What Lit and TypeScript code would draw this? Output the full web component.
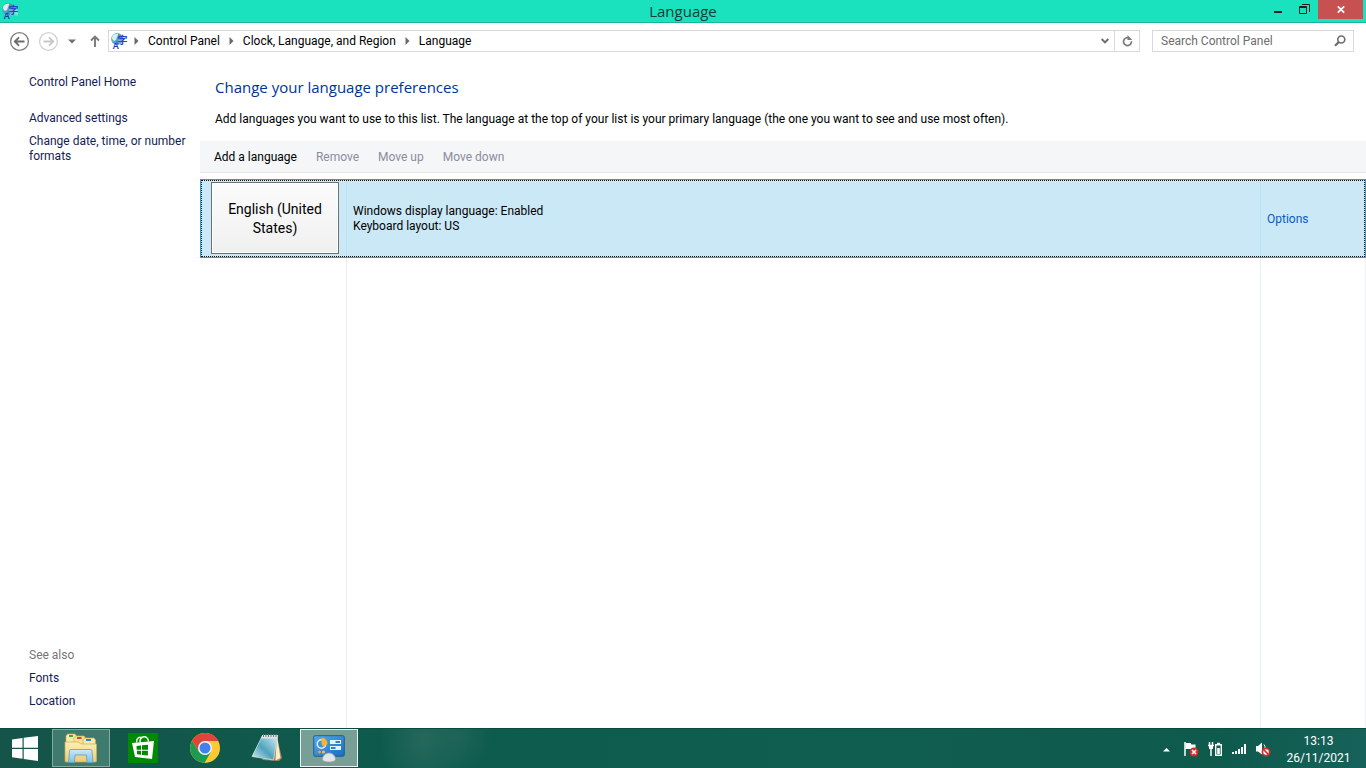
import { LitElement, html, css, svg } from "lit";
import { customElement } from "lit/decorators.js";

const gradients = svg`
  <defs>
    <linearGradient id="globe" x1="0" y1="0" x2="1" y2="1"><stop offset="0" stop-color="#8fd0f5"/><stop offset="1" stop-color="#1565b0"/></linearGradient>
    <linearGradient id="folder" x1="0" y1="0" x2="0" y2="1"><stop offset="0" stop-color="#fdf0b4"/><stop offset="1" stop-color="#ecca70"/></linearGradient>
    <linearGradient id="stand" x1="0" y1="0" x2="0" y2="1"><stop offset="0" stop-color="#c9e9fa"/><stop offset="1" stop-color="#7fc0e6"/></linearGradient>
    <linearGradient id="page" x1="1" y1="0" x2="0" y2="1"><stop offset="0" stop-color="#d8f0f6"/><stop offset=".55" stop-color="#4fa3bd"/><stop offset="1" stop-color="#d8eef4"/></linearGradient>
    <linearGradient id="panel" x1="0" y1="0" x2="1" y2="1"><stop offset="0" stop-color="#55aae8"/><stop offset="1" stop-color="#1a6cc0"/></linearGradient>
  </defs>`;

const globeIcon = html`<svg class="icon" width="16" height="16" viewBox="0 0 16 16" aria-hidden="true">
  ${gradients}
  <circle cx="6.2" cy="6" r="5.7" fill="url(#globe)" stroke="#3c86bd" stroke-width=".5"/>
  <path d="M1 4C2 1.500 5 .4 7 .8L8 2.500 6 4 5 7 3 8 1.200 6z" fill="#d9f1e6"/>
  <path d="M7 1l2.500 1 1 2-2 1-2-1z" fill="#4fa54a"/>
  <path d="M7 6.500h9v6L8 12z" fill="#fff" opacity=".35"/>
  <text x="1.500" y="15.500" font-family="Liberation Sans" font-size="9" font-weight="bold" fill="#1f3fae">A</text>
  <text x="6.500" y="11" font-family="Noto Sans CJK JP" font-size="10" font-weight="bold" fill="#2545c5">字</text>
</svg>`;

const crumbArrow = html`<svg width="5" height="8" viewBox="0 0 5 8" aria-hidden="true"><path d="M.5 0L4.500 4 .5 8z" fill="#6a6a6a"/></svg>`;

@customElement("app-root")
export class AppRoot extends LitElement {
  static styles = css`
    :host {
      display: flex; flex-direction: column; height: 100vh; overflow: hidden;
      font: 12px/15px Roboto, "Open Sans", sans-serif; color: #000; background: #fff;
    }
    * { box-sizing: border-box; }
    button, input { font: inherit; color: inherit; background: none; border: 0; padding: 0; margin: 0; }
    a { text-decoration: none; color: #151c55; }
    svg { display: block; flex: none; overflow: visible; }
    h1, p { margin: 0; font-weight: 400; }

    .titlebar { display: grid; grid-template-columns: 1fr auto 1fr; height: 23px; background: #1ae1be; border-bottom: 1px solid #17b69b; }
    .titlebar .icon { margin: 3px 2px; }
    .title { font: 15px/23px "Open Sans", sans-serif; color: #123c35; }
    .controls { display: flex; justify-content: flex-end; padding-right: 3px; }
    .controls button { width: 27px; height: 19px; display: flex; justify-content: center; }
    .controls .close { width: 45px; background: #c75050; }

    .nav { display: flex; align-items: center; height: 36px; padding: 0 12px 0 9px; }
    .nav .round { margin-right: 8px; }
    .nav .recent { width: 10px; margin-right: 13px; }
    .nav .up { margin-right: 8px; }
    .address { flex: 1; display: flex; align-items: center; height: 22px; border: 1px solid #d9d9d9; padding-left: 2px; }
    .crumbs { flex: 1; display: flex; align-items: center; gap: 9px; padding-left: 7px; }
    .crumbs a { color: #000; }
    .drop { width: 18px; display: flex; justify-content: center; }
    .refresh { width: 25px; height: 20px; display: flex; align-items: center; justify-content: center; border-left: 1px solid #d9d9d9; }
    .search { display: flex; align-items: center; width: 202px; height: 22px; margin-left: 12px; border: 1px solid #d9d9d9; padding: 0 7px 0 8px; }
    .search input { flex: 1; min-width: 0; outline: 0; }
    .search input::placeholder { color: #6d6d6d; opacity: 1; }

    .body { flex: 1; display: flex; min-height: 0; }
    .sidebar { width: 200px; display: flex; flex-direction: column; gap: 8px; padding: 16px 8px 19px 29px; }
    .home { margin-bottom: 13px; }
    .see { margin-top: auto; color: #75757d; }
    .main { flex: 1; display: flex; flex-direction: column; min-width: 0; }
    h1 { font: 15px/22px "Open Sans", sans-serif; color: #003399; padding: 17px 15px 14px; }
    .intro { padding: 0 15px; }
    .toolbar { display: flex; gap: 19px; height: 32px; margin: 14px 0 6px; padding: 2px 14px 0; background: #f5f6f7; border-bottom: 1px solid #e6e7e8; }
    .toolbar button:disabled { color: #8c8ca0; }
    .row { display: grid; grid-template-columns: 145px 1fr 105px; height: 79px; border: 1px solid #26a0da; background: #cbe8f6; outline: 1px dotted #111; outline-offset: -2px; }
    .row > div { display: flex; align-items: center; padding-left: 6px; }
    .row > .name { align-items: stretch; padding: 2px 7px 3px 10px; }
    .row > div + div { border-left: 1px solid #b9e2f5; }
    .tile { flex: 1; border: 1px solid #707070; box-shadow: inset 0 0 0 1px #fff; background: linear-gradient(#fbfbfb, #f5f5f5 60%, #eeefef); font-size: 14px; line-height: 19px; }
    .tile span { display: block; padding: 2px 8px 0; }
    .options { display: block; padding-top: 2px; color: #0a5bc4; }
    .rest { flex: 1; display: grid; grid-template-columns: 146px 1fr 105px; border-right: 1px solid #edf4fc; }
    .rest div + div { border-left: 1px solid #e5f1fb; }

    .taskbar {
      display: flex; align-items: center; height: 40px; color: #fff;
      background:
        radial-gradient(ellipse 44px 60px at 424px 12px, #3b756a80, #2c6c6200),
        radial-gradient(ellipse 30px 40px at 462px 8px, #2c6c6270, #2c6c6200),
        linear-gradient(90deg, #155449, #0d5b4d 30%, #105e50 65%, #0e5a4d 90%, #16625a);
      box-shadow: inset 0 1px #0a4b40;
    }
    .task { width: 58px; height: 38px; margin-right: 4px; display: flex; align-items: center; justify-content: center; border: 1px solid transparent; }
    .start { width: 52px; margin-right: 0; padding-right: 2px; }
    .open { background: #3f7a6f; border-color: #86aaa3; }
    .active { background: #779f95; border-color: #edf3f1; }
    .tray { margin-left: auto; display: flex; align-items: center; gap: 8px; padding-top: 2px; }
    .more { margin-right: 4px; }
    .clock { line-height: 17px; text-align: center; width: 95px; padding-top: 3px; }
  `;

  render() {
    return html`
      <header class="titlebar">
        ${globeIcon}
        <div class="title">Language</div>
        <div class="controls">
          <button aria-label="Minimize"><svg width="10" height="19" viewBox="0 0 10 19"><path d="M1 11h8v2H1z" fill="#222"/></svg></button>
          <button aria-label="Restore"><svg width="11" height="19" viewBox="0 0 11 19"><path d="M3 4.500h7.500V12M.5 6.500h7v7h-7zM.5 7.500h7" fill="none" stroke="#222"/></svg></button>
          <button class="close" aria-label="Close"><svg width="8" height="19" viewBox="0 0 8 19"><path d="M.8 6.300l6.400 6.400M7.200 6.300L.8 12.700" stroke="#fff" stroke-width="1.700"/></svg></button>
        </div>
      </header>

      <nav class="nav">
        <button class="round" aria-label="Back"><svg width="21" height="21" viewBox="0 0 21 21"><circle cx="10.500" cy="10.500" r="8.900" fill="none" stroke="#7c7c7c" stroke-width="1.300"/><path d="M15.500 10.500H6.500M10 6.300L5.800 10.500l4.200 4.200" fill="none" stroke="#6c6c6c" stroke-width="1.900"/></svg></button>
        <button class="round" aria-label="Forward"><svg width="21" height="21" viewBox="0 0 21 21"><circle cx="10.500" cy="10.500" r="8.900" fill="none" stroke="#d2d2d2" stroke-width="1.300"/><path d="M5.500 10.500h9M11 6.300l4.200 4.200-4.200 4.200" fill="none" stroke="#c8c8c8" stroke-width="1.900"/></svg></button>
        <button class="recent" aria-label="Recent locations"><svg width="10" height="5" viewBox="0 0 10 5"><path d="M1 .5h8L5 4.500z" fill="#707070"/></svg></button>
        <button class="up" aria-label="Up"><svg width="10" height="12" viewBox="0 0 10 12"><path d="M5 12V1.500M1 5.500l4-4 4 4" fill="none" stroke="#7a7a7a" stroke-width="1.900"/></svg></button>
        <div class="address">
          ${globeIcon}
          <div class="crumbs">
            ${crumbArrow}<a href="#">Control Panel</a>
            ${crumbArrow}<a href="#">Clock, Language, and Region</a>
            ${crumbArrow}<a href="#">Language</a>
          </div>
          <button class="drop" aria-label="Previous locations"><svg width="8" height="6" viewBox="0 0 8 6"><path d="M.7 1L4 4.300 7.300 1" fill="none" stroke="#6c6c6c" stroke-width="1.900"/></svg></button>
          <button class="refresh" aria-label="Refresh"><svg width="11" height="12" viewBox="0 0 11 12"><path d="M6.800 2.800A4 4 0 1 0 9.500 6.300" fill="none" stroke="#7a7a7a" stroke-width="1.700"/><path d="M5.500 0v5h4.800z" fill="#7a7a7a"/></svg></button>
        </div>
        <label class="search">
          <input type="text" placeholder="Search Control Panel" aria-label="Search Control Panel">
          <svg width="12" height="12" viewBox="0 0 12 12"><circle cx="7.300" cy="4.500" r="3.500" fill="none" stroke="#6c6c6c" stroke-width="1.600"/><path d="M4.800 7L1 10.800" stroke="#6c6c6c" stroke-width="2.200"/></svg>
        </label>
      </nav>

      <div class="body">
        <aside class="sidebar">
          <a class="home" href="#">Control Panel Home</a>
          <a href="#">Advanced settings</a>
          <a href="#">Change date, time, or number formats</a>
          <span class="see">See also</span>
          <a href="#">Fonts</a>
          <a href="#">Location</a>
        </aside>
        <main class="main">
          <h1>Change your language preferences</h1>
          <p class="intro">Add languages you want to use to this list. The language at the top of your list is your primary language (the one you want to see and use most often).</p>
          <div class="toolbar">
            <button>Add a language</button>
            <button disabled>Remove</button>
            <button disabled>Move up</button>
            <button disabled>Move down</button>
          </div>
          <section class="row">
            <div class="name"><button class="tile"><span>English (United States)</span></button></div>
            <div>Windows display language: Enabled<br>Keyboard layout: US</div>
            <div><a class="options" href="#">Options</a></div>
          </section>
          <div class="rest"><div></div><div></div><div></div></div>
        </main>
      </div>

      <footer class="taskbar">
        <button class="task start" aria-label="Start"><svg width="26" height="25" viewBox="0 0 26 25"><path d="M0 3.500L10.500 2v9.800H0zM11.700 1.800L26 0v11.800H11.700zM0 13h10.500v9.800L0 21.300zM11.700 13H26v12l-14.300-2z" fill="#fff"/></svg></button>
        <button class="task open" aria-label="File Explorer"><svg width="34" height="30" viewBox="0 0 34 30">${gradients}
          <path d="M2 3l1.500-2H11l1.500 2H13v24H2z" fill="#fbe9a6" stroke="#d0aa55" stroke-width=".7"/>
          <path d="M10 5l1.500-2H20l1.500 2v20H10z" fill="#f9e296" stroke="#d0aa55" stroke-width=".7"/>
          <path d="M19 7l1.500-2H30l1.500 2v20H19z" fill="#fbe9a6" stroke="#d0aa55" stroke-width=".7"/>
          <path d="M5 2h4v2H5z" fill="#2fae3f"/><path d="M13 4h4.500v2H13z" fill="#d94335"/><path d="M22 6h5v2h-5z" fill="#2a84da"/>
          <path d="M1 9h13l3 2h15.500v17q0 1-1 1H2q-1 0-1-1z" fill="url(#folder)" stroke="#cfa94f" stroke-width=".7"/>
          <path d="M5.500 18q0-1.500 1.500-1.500h19.500q1.500 0 1.500 1.500l1 11.500h-6l-.5-7.500H11l-.5 7.500h-6z" fill="url(#stand)" stroke="#5d9fc8" stroke-width=".8"/></svg></button>
        <button class="task" aria-label="Store"><svg width="30" height="30" viewBox="0 0 30 30"><path fill="#008a00" d="M0 0h30v30H0z"/><path d="M8.500 9.500C8.500 4.500 12 3 14 5.500M12 9.500C11.500 2.500 20 1.500 20.500 8.500" fill="none" stroke="#fff" stroke-width="1.400"/><path d="M4 10l22-2-2 18-17-2z" fill="#fff"/><path d="M8.500 13l4.500-.5v4.200H8.700zM14 12.300l6-.6v5h-6zM8.900 17.700H13v4.100l-3.900-.5zM14 17.700h5.900v4.900l-5.900-.7z" fill="#008a00"/></svg></button>
        <button class="task" aria-label="Chrome"><svg width="30" height="30" viewBox="0 0 30 30"><circle cx="15" cy="15" r="15" fill="#fcc934"/><path d="M2.200 7.300L8.940 18.500 15 15l6.060 3.500L14.500 30A15 15 0 0 1 2.200 7.300z" fill="#1e9b50"/><path d="M2.200 7.300A15 15 0 0 1 28.300 8H15v7l-6.060 3.500z" fill="#dd4639"/><circle cx="15" cy="15" r="7" fill="#f6f6f6"/><circle cx="15" cy="15" r="5.500" fill="#3f82ee"/></svg></button>
        <button class="task" aria-label="Notepad"><svg width="32" height="30" viewBox="0 0 32 30">${gradients}<path d="M26 4l5 21-3 3-17-1z" fill="#a9824e"/><path d="M26 3l3.500 22-5 2.500z" fill="#f5ecd2"/><path d="M11.500 2.500h15L22.500 27 1 23.500z" fill="url(#page)" stroke="#d8e9ec" stroke-width=".7"/><path d="M11.500 2h15.500l-.5 3.500H10z" fill="#dde3e3"/><path d="M12.500 1v3M15 1v3M17.500 1v3M20 1v3M22.500 1v3M25 1v3" stroke="#6c7a7c"/></svg></button>
        <button class="task active" aria-label="Control Panel"><svg width="32" height="30" viewBox="0 0 32 30">${gradients}<rect x=".7" y="2.700" width="30.600" height="20.600" rx="1.500" fill="url(#panel)" stroke="#1c5f9e"/><circle cx="8.500" cy="11" r="4.300" fill="#3d92d8" stroke="#e4f2fb" stroke-width="1.400"/><path d="M8.500 11V4.500A6.200 6.200 0 0 1 14.500 11l-4 3z" fill="#f9b23a"/><path d="M17 7h11v4H17zM17 13h11v4H17z" fill="#e4f2fb"/><path d="M22.500 8H27v2h-4.500zM18 14h4.500v2H18z" fill="#2c81cc"/><circle cx="6.500" cy="19" r="1.400" fill="#f8a430"/><circle cx="10.500" cy="19" r="1.600" fill="#f8c030"/><path d="M9.500 26c0-3 3-6 6.500-6s6.500 3 6.500 6q0 3-6.500 3t-6.500-3z" fill="#e2e5e7" stroke="#979fa5" stroke-width=".6"/></svg></button>

        <div class="tray">
          <svg class="more" width="9" height="5" viewBox="0 0 9 5"><path d="M1 4.500L4.500 1 8 4.500z" fill="#fff"/></svg>
          <svg width="16" height="16" viewBox="0 0 16 16"><path d="M2 1v14" stroke="#fff" stroke-width="1.500"/><path d="M2.500 2h5l1 1.500h4V9h-4l-1-1h-5z" fill="#fff"/><circle cx="11" cy="11" r="4.500" fill="#da2b2b"/><path d="M9 9l4 4M13 9l-4 4" stroke="#fff" stroke-width="1.500"/></svg>
          <svg width="16" height="16" viewBox="0 0 16 16"><path d="M2.500 1v3M5.500 1v3M1 4.500h6M4 5v10" stroke="#fff" stroke-width="1.500"/><path d="M2 5h4v3H2z" fill="#fff"/><path d="M8.700 3.700h5.600v10.600H8.700zM10 2.500h3" fill="none" stroke="#fff" stroke-width="1.400"/><path d="M10.200 7h2.600v6h-2.600z" fill="#fff"/></svg>
          <svg width="16" height="16" viewBox="0 0 16 16"><path d="M1 11h2v2H1zM4 10h2v3H4zM7 8h2v5H7zM10 6h2v7h-2zM13 3h2v10h-2z" fill="#fff"/></svg>
          <svg width="16" height="16" viewBox="0 0 16 16"><path d="M1 5h2l4-3.500v12L3 10.500H1z" fill="#fff"/><path d="M9 3.500q1.500 2 1 4" fill="none" stroke="#fff"/><circle cx="11" cy="11" r="3.600" fill="#fff" stroke="#da2b2b" stroke-width="1.700"/><path d="M8.500 8.500l5 5" stroke="#da2b2b" stroke-width="1.700"/></svg>
        </div>
        <div class="clock">13:13<br>26/11/2021</div>
      </footer>`;
  }
}
